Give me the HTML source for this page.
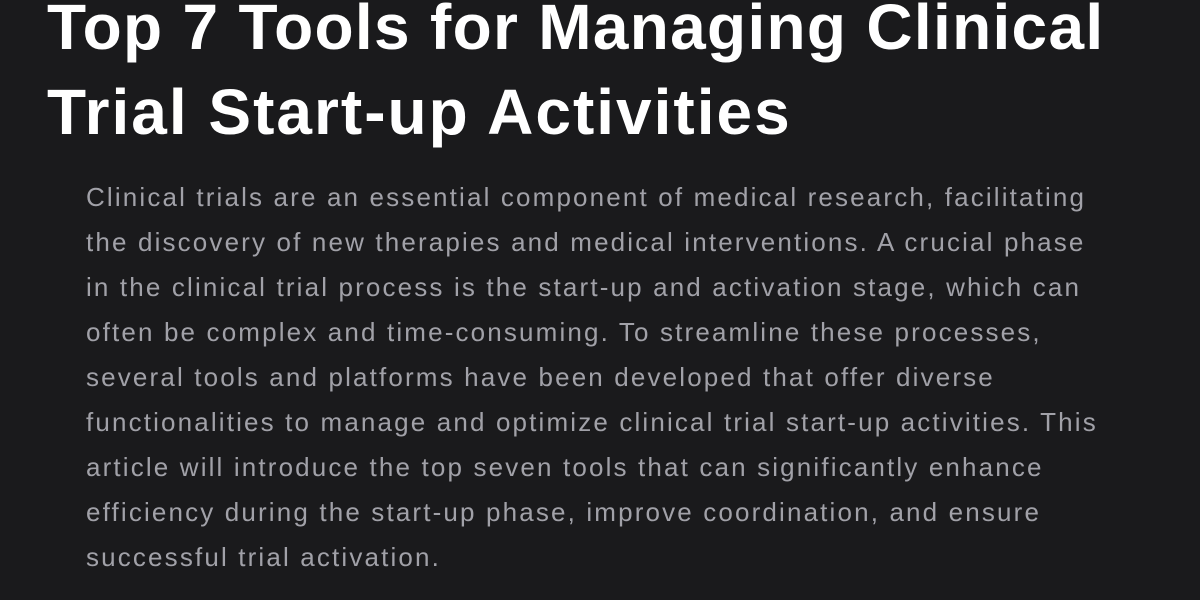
<!DOCTYPE html>
<html><head><style>
html,body{margin:0;padding:0;background:#1a1a1c;width:1200px;height:600px;overflow:hidden}
h1{position:absolute;left:47px;top:-15px;margin:0;font:bold 64px/85px "Liberation Sans",sans-serif;color:#fff;white-space:nowrap;letter-spacing:1.3px}
h1 span{letter-spacing:2px}
p{position:absolute;left:86px;top:175px;margin:0;font:26px/45px "Liberation Sans",sans-serif;color:#a1a1a8;white-space:nowrap;letter-spacing:2.15px}
</style></head><body>
<h1>Top 7 Tools for Managing Clinical<br><span>Trial Start-up Activities</span></h1>
<p>Clinical trials are an essential component of medical research, facilitating<br>
the discovery of new therapies and medical interventions. A crucial phase<br>
in the clinical trial process is the start-up and activation stage, which can<br>
often be complex and time-consuming. To streamline these processes,<br>
several tools and platforms have been developed that offer diverse<br>
functionalities to manage and optimize clinical trial start-up activities. This<br>
article will introduce the top seven tools that can significantly enhance<br>
efficiency during the start-up phase, improve coordination, and ensure<br>
successful trial activation.</p>
</body></html>
